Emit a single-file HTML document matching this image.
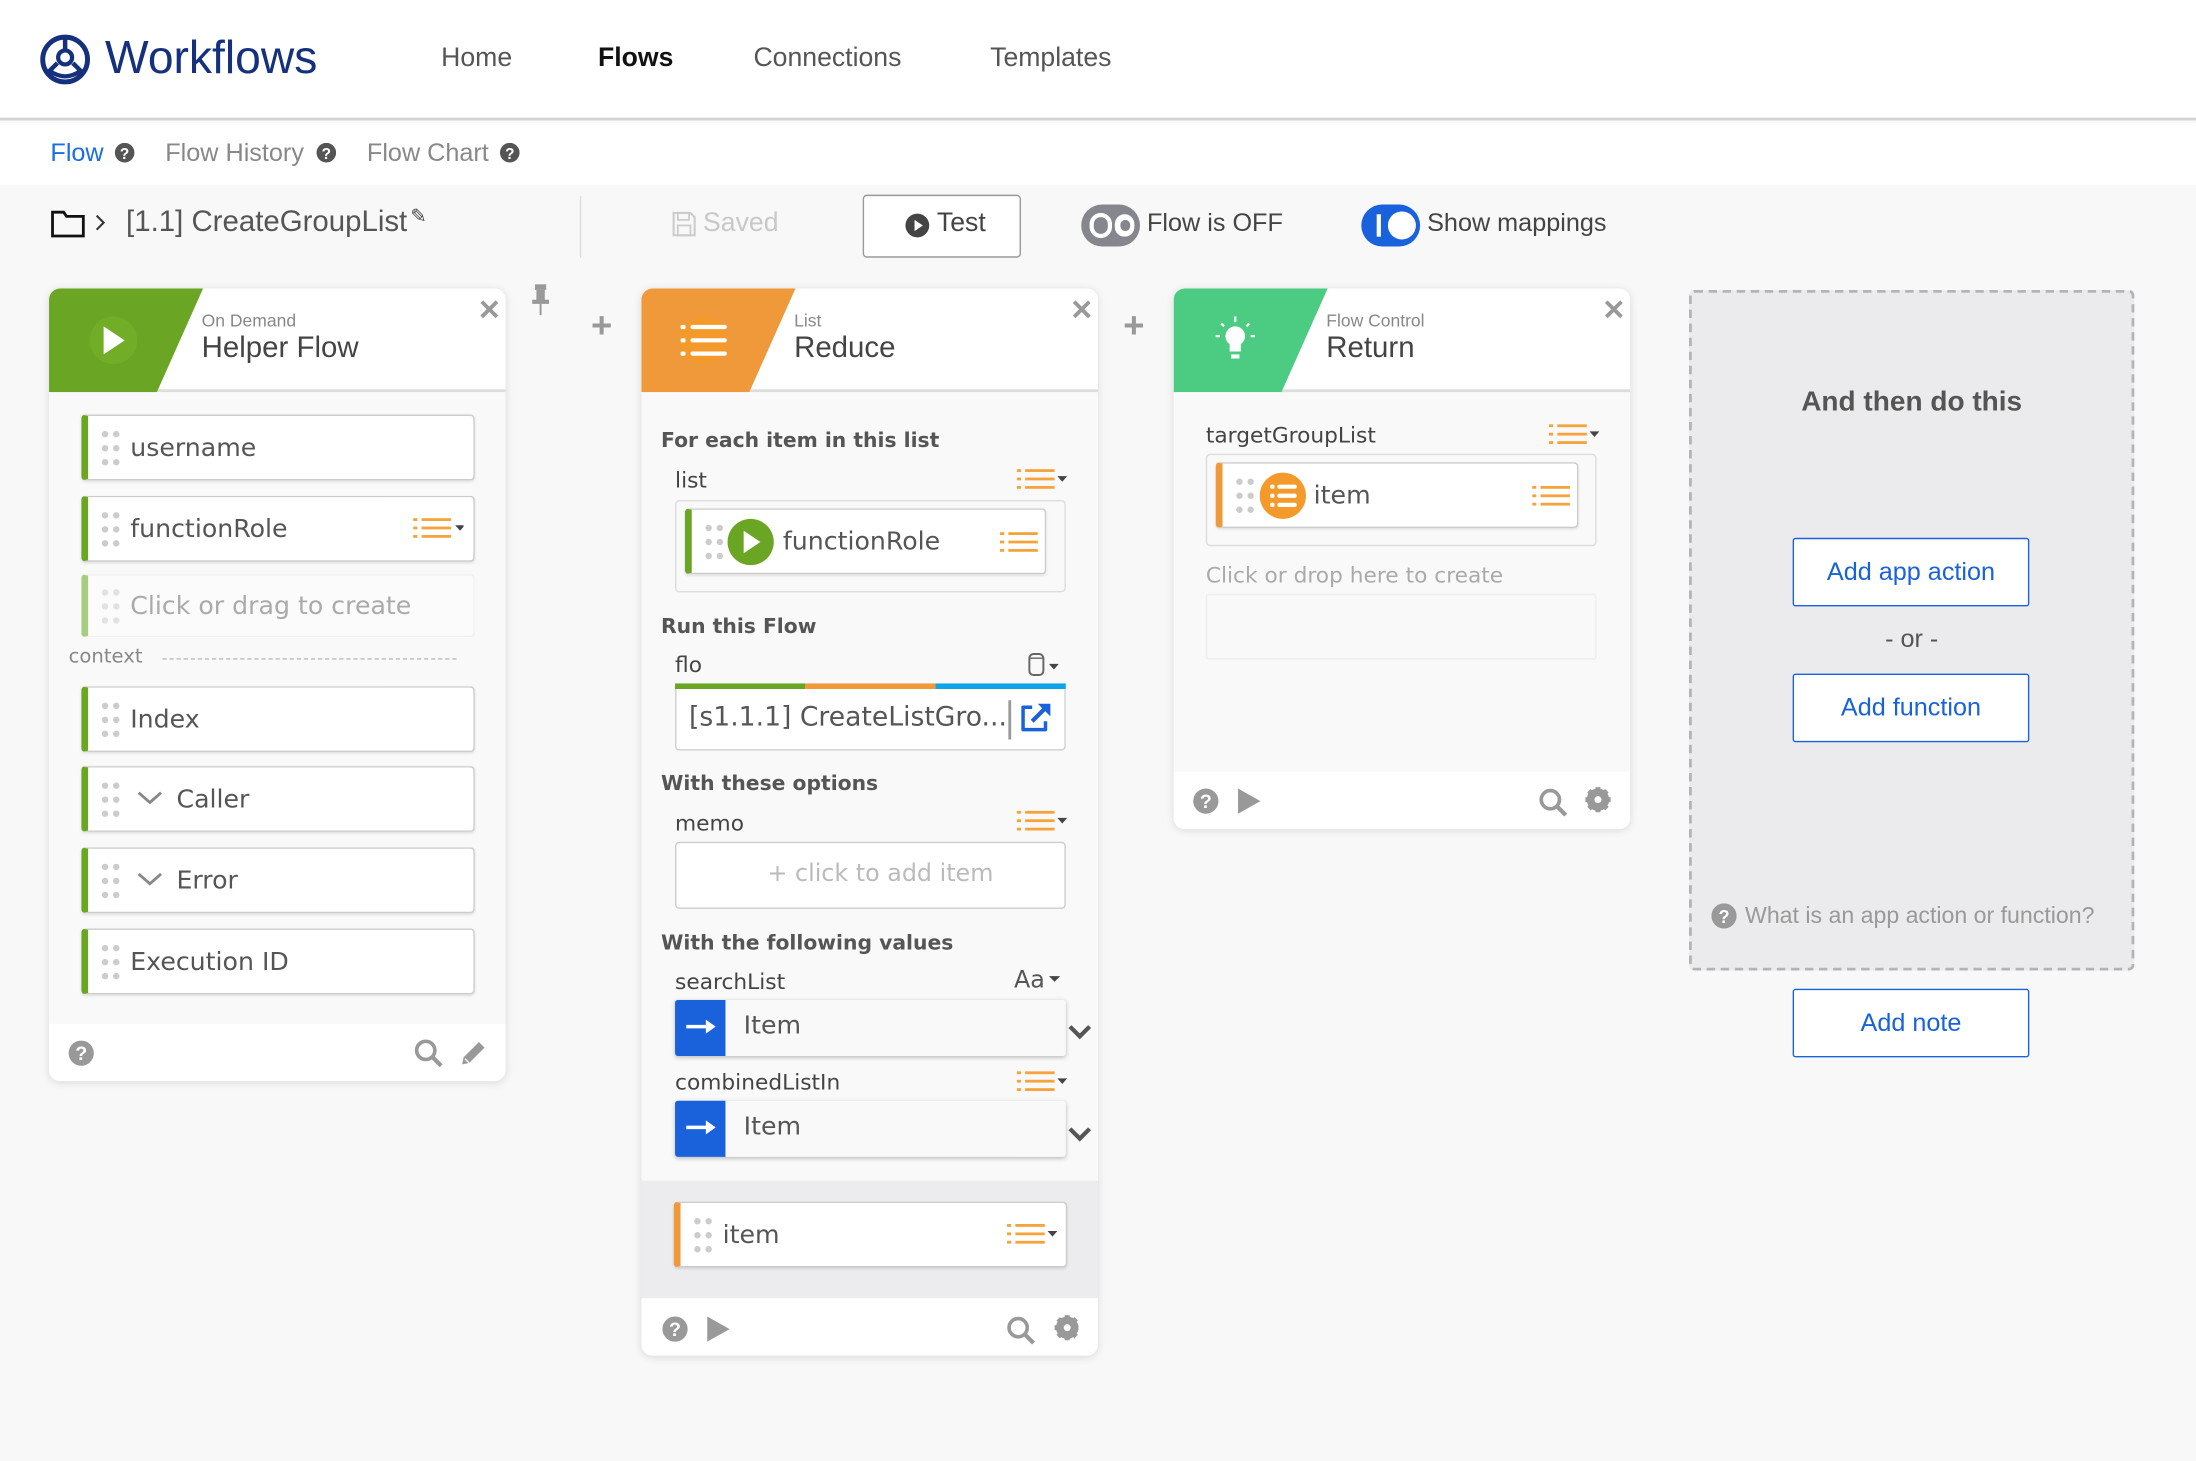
<!DOCTYPE html>
<html><head><meta charset="utf-8">
<style>
*{box-sizing:border-box;margin:0;padding:0}
html,body{width:2196px;height:1460px;overflow:hidden;background:#f8f8f8}
#w{position:absolute;left:0;top:0;width:1568px;height:1043px;transform:scale(1.4005);transform-origin:0 0;font-family:"Liberation Sans",sans-serif;color:#444}
.a{position:absolute}
.t{position:absolute;white-space:nowrap}
.dv{font-family:"DejaVu Sans","Liberation Sans",sans-serif}
.card{position:absolute;background:#f9f9f9;border-radius:8px;box-shadow:0 1px 6px rgba(0,0,0,.12);overflow:hidden}
.hd{position:absolute;left:0;top:0;width:100%;height:74px;background:#fff;border-bottom:2px solid #ddd}
.ft{position:absolute;left:0;bottom:0;width:100%;height:41px;background:#fff}
.fld{position:absolute;background:#fff;border:1px solid #ccc;border-left:5px solid #6aa524;border-radius:3px;box-shadow:0 1px 2px rgba(0,0,0,.1)}
.fld .n{position:absolute;top:50%;transform:translateY(-50%);font-family:"DejaVu Sans",sans-serif;font-size:18px;color:#555;white-space:nowrap}
.lbl{position:absolute;font-family:"DejaVu Sans",sans-serif;font-size:15.5px;color:#444;white-space:nowrap}
.sec{position:absolute;font-family:"DejaVu Sans",sans-serif;font-size:14.5px;font-weight:bold;color:#555;white-space:nowrap}
.btn{position:absolute;left:1280px;width:169px;height:49px;background:#fff;border:1.5px solid #1a62dc;border-radius:2px;color:#1a62dc;font-size:18px;text-align:center;line-height:46px}
.x{position:absolute;font-size:20px;color:#999;font-weight:bold}
</style></head><body><div id="w">

<!-- header -->
<div class="a" style="left:0;top:0;width:1568px;height:86px;background:#fff;border-bottom:2px solid #d4d4d6"></div>
<svg class="a" style="left:28px;top:24px" width="37" height="37" viewBox="0 0 37 37"><circle cx="18.5" cy="18.5" r="16" fill="none" stroke="#15307c" stroke-width="3.5"/><circle cx="18.5" cy="17" r="5" fill="none" stroke="#15307c" stroke-width="3"/><path d="M18.5 3v9M13 21 5 29M24 21l8 8" stroke="#15307c" stroke-width="3.2"/><path d="M8 27q10.5 7 21 0" fill="none" stroke="#15307c" stroke-width="3"/></svg>
<div class="t" style="left:75px;top:22px;font-size:33px;color:#15307c">Workflows</div>
<div class="t" style="left:315px;top:31px;font-size:19px;color:#555">Home</div>
<div class="t" style="left:427px;top:31px;font-size:19px;color:#111;font-weight:bold">Flows</div>
<div class="t" style="left:538px;top:31px;font-size:19px;color:#555">Connections</div>
<div class="t" style="left:707px;top:31px;font-size:19px;color:#555">Templates</div>

<!-- subnav -->
<div class="a" style="left:0;top:88px;width:1568px;height:44px;background:#fff"></div>
<div class="t" style="left:36px;top:99px;font-size:18px;color:#1a6ee8">Flow</div>
<svg class="a" style="left:82px;top:102px" width="14" height="14"><circle cx="7" cy="7" r="7" fill="#555"/><text x="7" y="11.5" font-size="11" font-weight="bold" fill="#fff" text-anchor="middle" font-family="Liberation Sans">?</text></svg>
<div class="t" style="left:118px;top:99px;font-size:18px;color:#888">Flow History</div>
<svg class="a" style="left:226px;top:102px" width="14" height="14"><circle cx="7" cy="7" r="7" fill="#555"/><text x="7" y="11.5" font-size="11" font-weight="bold" fill="#fff" text-anchor="middle" font-family="Liberation Sans">?</text></svg>
<div class="t" style="left:262px;top:99px;font-size:18px;color:#888">Flow Chart</div>
<svg class="a" style="left:357px;top:102px" width="14" height="14"><circle cx="7" cy="7" r="7" fill="#555"/><text x="7" y="11.5" font-size="11" font-weight="bold" fill="#fff" text-anchor="middle" font-family="Liberation Sans">?</text></svg>

<!-- toolbar -->
<svg class="a" style="left:36px;top:148px" width="42" height="22"><path d="M1.5 3.5h8l2 3h12v14h-22z" fill="none" stroke="#111" stroke-width="2"/><path d="M33 6l5 5-5 5" fill="none" stroke="#333" stroke-width="1.5"/></svg>
<div class="t" style="left:90px;top:147px;font-size:21px;color:#555">[1.1] CreateGroupList</div>
<div class="t" style="left:293px;top:146px;font-size:14px;color:#444">✎</div>
<div class="a" style="left:414px;top:140px;width:1px;height:44px;background:#ddd"></div>
<svg class="a" style="left:480px;top:151px" width="17" height="18"><path d="M1 1h12l3 3v13H1z" fill="none" stroke="#ccc" stroke-width="1.5"/><rect x="4" y="1" width="8" height="5" fill="none" stroke="#ccc" stroke-width="1.3"/><rect x="4" y="10" width="9" height="7" fill="none" stroke="#ccc" stroke-width="1.3"/></svg>
<div class="t" style="left:502px;top:149px;font-size:19px;color:#c8c8c8">Saved</div>
<div class="a" style="left:616px;top:139px;width:113px;height:45px;background:#fff;border:1.5px solid #999;border-radius:3px"></div>
<svg class="a" style="left:646px;top:152px" width="18" height="18"><circle cx="9" cy="9" r="8.5" fill="#444"/><path d="M7 5l6 4-6 4z" fill="#fff"/></svg>
<div class="t" style="left:669px;top:149px;font-size:19px;color:#444">Test</div>
<div class="a" style="left:772px;top:146px;width:42px;height:30px;border-radius:15px;background:#86868f"></div>
<div class="a" style="left:778px;top:152px;width:16px;height:18px;border-radius:9px;border:3px solid #fff"></div>
<div class="a" style="left:796px;top:153px;width:14px;height:16px;border-radius:8px;background:#fff"></div>
<div class="a" style="left:800px;top:157px;width:7px;height:8px;border-radius:4px;background:#86868f"></div>
<div class="t" style="left:819px;top:149px;font-size:18px;color:#444">Flow is OFF</div>
<div class="a" style="left:972px;top:146px;width:42px;height:30px;border-radius:15px;background:#1a62dc"></div>
<div class="a" style="left:983px;top:153px;width:3px;height:16px;background:#fff"></div>
<div class="a" style="left:991px;top:151px;width:20px;height:20px;border-radius:10px;background:#fff"></div>
<div class="t" style="left:1019px;top:149px;font-size:18px;color:#444">Show mappings</div>

<!-- pin & pluses -->
<svg class="a" style="left:378px;top:202px" width="16" height="24"><rect x="4" y="1" width="8" height="4" fill="#999"/><rect x="5" y="5" width="6" height="8" fill="#999"/><rect x="2" y="12" width="12" height="3" fill="#999"/><rect x="7.3" y="15" width="1.4" height="8" fill="#999"/></svg>
<div class="t" style="left:422px;top:217px;font-size:26px;color:#999;font-weight:bold">+</div>
<div class="t" style="left:802px;top:217px;font-size:26px;color:#999;font-weight:bold">+</div>

<!-- CARD 1 -->
<div class="card" style="left:35px;top:206px;width:326px;height:566px">
 <div class="hd"></div>
 <svg class="a" style="left:0;top:0" width="120" height="74"><path d="M0 0H110L77 74H0z" fill="#6aa524"/><circle cx="46" cy="37" r="17" fill="#72ad28"/><path d="M39 27l15 10-15 10z" fill="#fff"/></svg>
 <div class="t" style="left:109px;top:16px;font-size:12.5px;color:#888">On Demand</div>
 <div class="t" style="left:109px;top:31px;font-size:21px;color:#444">Helper Flow</div>
 <div class="x" style="left:306px;top:3px">✕</div>
 <div class="ft"></div>
</div>
<!-- fields card1 -->
<div class="fld" style="left:58px;top:296px;width:281px;height:47px"><svg class="a" style="left:9px;top:10px" width="14" height="26"><g fill="#ccc"><circle cx="3" cy="3" r="2.3"/><circle cx="11" cy="3" r="2.3"/><circle cx="3" cy="13" r="2.3"/><circle cx="11" cy="13" r="2.3"/><circle cx="3" cy="23" r="2.3"/><circle cx="11" cy="23" r="2.3"/></g></svg><span class="n" style="left:30px">username</span></div>
<div class="fld" style="left:58px;top:354px;width:281px;height:47px"><svg class="a" style="left:9px;top:10px" width="14" height="26"><g fill="#ccc"><circle cx="3" cy="3" r="2.3"/><circle cx="11" cy="3" r="2.3"/><circle cx="3" cy="13" r="2.3"/><circle cx="11" cy="13" r="2.3"/><circle cx="3" cy="23" r="2.3"/><circle cx="11" cy="23" r="2.3"/></g></svg><span class="n" style="left:30px">functionRole</span>
 <svg class="a" style="left:232px;top:14px" width="36" height="16"><g fill="#f5a33a"><rect x="0" y="1" width="3" height="2"/><rect x="6" y="1" width="21" height="2"/><rect x="0" y="7" width="3" height="2"/><rect x="6" y="7" width="21" height="2"/><rect x="0" y="13" width="3" height="2"/><rect x="6" y="13" width="21" height="2"/></g><path d="M30 6h7l-3.5 4z" fill="#444"/></svg></div>
<div class="fld" style="left:58px;top:410px;width:281px;height:45px;border-color:#f0f0f0;border-left-color:#a8cc80;box-shadow:none;background:#fbfbfb"><svg class="a" style="left:9px;top:9px" width="14" height="26"><g fill="#e2e2e2"><circle cx="3" cy="3" r="2.3"/><circle cx="11" cy="3" r="2.3"/><circle cx="3" cy="13" r="2.3"/><circle cx="11" cy="13" r="2.3"/><circle cx="3" cy="23" r="2.3"/><circle cx="11" cy="23" r="2.3"/></g></svg><span class="n" style="left:30px;color:#aaa">Click or drag to create</span></div>
<div class="t dv" style="left:49px;top:461px;font-size:14px;color:#888">context</div>
<div class="a" style="left:116px;top:470px;width:210px;border-top:1px dashed #bbb"></div>
<div class="fld" style="left:58px;top:490px;width:281px;height:47px"><svg class="a" style="left:9px;top:10px" width="14" height="26"><g fill="#ccc"><circle cx="3" cy="3" r="2.3"/><circle cx="11" cy="3" r="2.3"/><circle cx="3" cy="13" r="2.3"/><circle cx="11" cy="13" r="2.3"/><circle cx="3" cy="23" r="2.3"/><circle cx="11" cy="23" r="2.3"/></g></svg><span class="n" style="left:30px">Index</span></div>
<div class="fld" style="left:58px;top:547px;width:281px;height:47px"><svg class="a" style="left:9px;top:10px" width="14" height="26"><g fill="#ccc"><circle cx="3" cy="3" r="2.3"/><circle cx="11" cy="3" r="2.3"/><circle cx="3" cy="13" r="2.3"/><circle cx="11" cy="13" r="2.3"/><circle cx="3" cy="23" r="2.3"/><circle cx="11" cy="23" r="2.3"/></g></svg><svg class="a" style="left:34px;top:16px" width="20" height="12"><path d="M2 2l8 7 8-7" fill="none" stroke="#888" stroke-width="2"/></svg><span class="n" style="left:63px">Caller</span></div>
<div class="fld" style="left:58px;top:605px;width:281px;height:47px"><svg class="a" style="left:9px;top:10px" width="14" height="26"><g fill="#ccc"><circle cx="3" cy="3" r="2.3"/><circle cx="11" cy="3" r="2.3"/><circle cx="3" cy="13" r="2.3"/><circle cx="11" cy="13" r="2.3"/><circle cx="3" cy="23" r="2.3"/><circle cx="11" cy="23" r="2.3"/></g></svg><svg class="a" style="left:34px;top:16px" width="20" height="12"><path d="M2 2l8 7 8-7" fill="none" stroke="#888" stroke-width="2"/></svg><span class="n" style="left:63px">Error</span></div>
<div class="fld" style="left:58px;top:663px;width:281px;height:47px"><svg class="a" style="left:9px;top:10px" width="14" height="26"><g fill="#ccc"><circle cx="3" cy="3" r="2.3"/><circle cx="11" cy="3" r="2.3"/><circle cx="3" cy="13" r="2.3"/><circle cx="11" cy="13" r="2.3"/><circle cx="3" cy="23" r="2.3"/><circle cx="11" cy="23" r="2.3"/></g></svg><span class="n" style="left:30px">Execution ID</span></div>
<svg class="a" style="left:48px;top:742px" width="20" height="20"><circle cx="10" cy="10" r="9" fill="#999"/><text x="10" y="15" font-size="14" font-weight="bold" fill="#fff" text-anchor="middle" font-family="Liberation Sans">?</text></svg>
<svg class="a" style="left:295px;top:741px" width="22" height="22"><circle cx="9" cy="9" r="6.5" fill="none" stroke="#999" stroke-width="2.6"/><path d="M14 14l6 6" stroke="#999" stroke-width="3"/></svg>
<svg class="a" style="left:328px;top:742px" width="20" height="20"><path d="M2 18l1-5L14 2l4 4L7 17z" fill="#999"/><path d="M4 14l3 3" stroke="#fff" stroke-width="1"/></svg>

<!-- CARD 2 -->
<div class="card" style="left:458px;top:206px;width:326px;height:762px">
 <div class="hd"></div>
 <svg class="a" style="left:0;top:0" width="120" height="74"><path d="M0 0H110L77 74H0z" fill="#f0993a"/><circle cx="44" cy="37" r="17" fill="#f39a2a"/><g fill="#fff"><rect x="28" y="26" width="3.5" height="3" rx="1"/><rect x="35" y="26" width="26" height="3" rx="1.5"/><rect x="28" y="35.5" width="3.5" height="3" rx="1"/><rect x="35" y="35.5" width="26" height="3" rx="1.5"/><rect x="28" y="45" width="3.5" height="3" rx="1"/><rect x="35" y="45" width="26" height="3" rx="1.5"/></g></svg>
 <div class="t" style="left:109px;top:16px;font-size:12.5px;color:#888">List</div>
 <div class="t" style="left:109px;top:31px;font-size:21px;color:#444">Reduce</div>
 <div class="x" style="left:306px;top:3px">✕</div>
 <div class="a" style="left:0;top:637px;width:326px;height:84px;background:#ececee"></div>
 <div class="ft"></div>
</div>
<div class="sec" style="left:472px;top:307px">For each item in this list</div>
<div class="lbl" style="left:482px;top:334px">list</div>
<svg class="a" style="left:726px;top:334px" width="36" height="16"><g fill="#f5a33a"><rect x="0" y="1" width="3" height="2"/><rect x="6" y="1" width="21" height="2"/><rect x="0" y="7" width="3" height="2"/><rect x="6" y="7" width="21" height="2"/><rect x="0" y="13" width="3" height="2"/><rect x="6" y="13" width="21" height="2"/></g><path d="M29 6h7l-3.5 4z" fill="#444"/></svg>
<div class="a" style="left:482px;top:357px;width:279px;height:66px;border:1.5px solid #ddd;border-radius:3px;background:#f9f9f9"></div>
<div class="fld" style="left:489px;top:363px;width:258px;height:47px"><svg class="a" style="left:9px;top:10px" width="14" height="26"><g fill="#ccc"><circle cx="3" cy="3" r="2.3"/><circle cx="11" cy="3" r="2.3"/><circle cx="3" cy="13" r="2.3"/><circle cx="11" cy="13" r="2.3"/><circle cx="3" cy="23" r="2.3"/><circle cx="11" cy="23" r="2.3"/></g></svg><svg class="a" style="left:25px;top:6px" width="34" height="34"><circle cx="17" cy="17" r="16.5" fill="#6aa524"/><path d="M12 9l12 8-12 8z" fill="#fff"/></svg><span class="n" style="left:65px">functionRole</span>
 <svg class="a" style="left:220px;top:15px" width="30" height="16"><g fill="#f5a33a"><rect x="0" y="1" width="3" height="2"/><rect x="6" y="1" width="21" height="2"/><rect x="0" y="7" width="3" height="2"/><rect x="6" y="7" width="21" height="2"/><rect x="0" y="13" width="3" height="2"/><rect x="6" y="13" width="21" height="2"/></g></svg></div>
<div class="sec" style="left:472px;top:440px">Run this Flow</div>
<div class="lbl" style="left:482px;top:466px">flo</div>
<svg class="a" style="left:734px;top:466px" width="28" height="18"><rect x="1" y="1" width="10" height="15" rx="3" fill="none" stroke="#666" stroke-width="1.4"/><path d="M1 4h10" stroke="#666" stroke-width="1"/><path d="M15 8h7l-3.5 4z" fill="#444"/></svg>
<div class="a" style="left:482px;top:488px;width:93px;height:4px;background:#6aa524"></div>
<div class="a" style="left:575px;top:488px;width:93px;height:4px;background:#f0993a"></div>
<div class="a" style="left:668px;top:488px;width:93px;height:4px;background:#0ea4e8"></div>
<div class="a" style="left:482px;top:492px;width:279px;height:44px;background:#fff;border:1.5px solid #ccc;border-top:none;border-radius:0 0 3px 3px"></div>
<div class="t dv" style="left:492px;top:501px;font-size:19px;color:#555">[s1.1.1] CreateListGro...</div>
<div class="a" style="left:720px;top:500px;width:1.5px;height:28px;background:#999"></div>
<svg class="a" style="left:728px;top:501px" width="24" height="22"><path d="M9 4H2.5v16h16v-6" fill="none" stroke="#1a62dc" stroke-width="2.5" stroke-linejoin="round"/><path d="M9 14L20 3" stroke="#1a62dc" stroke-width="3"/><path d="M13 1.5h9v9z" fill="#1a62dc"/></svg>
<div class="sec" style="left:472px;top:552px">With these options</div>
<div class="lbl" style="left:482px;top:579px">memo</div>
<svg class="a" style="left:726px;top:578px" width="36" height="16"><g fill="#f5a33a"><rect x="0" y="1" width="3" height="2"/><rect x="6" y="1" width="21" height="2"/><rect x="0" y="7" width="3" height="2"/><rect x="6" y="7" width="21" height="2"/><rect x="0" y="13" width="3" height="2"/><rect x="6" y="13" width="21" height="2"/></g><path d="M29 6h7l-3.5 4z" fill="#444"/></svg>
<div class="a" style="left:482px;top:601px;width:279px;height:48px;background:#fff;border:1.5px solid #ccc;border-radius:3px"></div>
<div class="t dv" style="left:548px;top:614px;font-size:17px;color:#bbb">+ click to add item</div>
<div class="sec" style="left:472px;top:666px">With the following values</div>
<div class="lbl" style="left:482px;top:692px">searchList</div>
<div class="t dv" style="left:724px;top:690px;font-size:17px;color:#555">Aa</div>
<svg class="a" style="left:748px;top:694px" width="12" height="10"><path d="M1 3h8l-4 4z" fill="#444"/></svg>
<div class="a" style="left:482px;top:714px;width:279px;height:40px;background:#f9f9f9;border-radius:2px;box-shadow:0 1px 3px rgba(0,0,0,.25)"></div>
<div class="a" style="left:482px;top:714px;width:36px;height:40px;background:#1a62dc;border-radius:2px 0 0 2px"></div>
<svg class="a" style="left:488px;top:726px" width="26" height="14"><path d="M2 7h16" stroke="#fff" stroke-width="2.5"/><path d="M16 2l7 5-7 5z" fill="#fff"/></svg>
<div class="t dv" style="left:531px;top:722px;font-size:18px;color:#555">Item</div>
<svg class="a" style="left:762px;top:730px" width="18" height="14"><path d="M2 3l7 7 7-7" fill="none" stroke="#555" stroke-width="3"/></svg>
<div class="lbl" style="left:482px;top:764px">combinedListIn</div>
<svg class="a" style="left:726px;top:764px" width="36" height="16"><g fill="#f5a33a"><rect x="0" y="1" width="3" height="2"/><rect x="6" y="1" width="21" height="2"/><rect x="0" y="7" width="3" height="2"/><rect x="6" y="7" width="21" height="2"/><rect x="0" y="13" width="3" height="2"/><rect x="6" y="13" width="21" height="2"/></g><path d="M29 6h7l-3.5 4z" fill="#444"/></svg>
<div class="a" style="left:482px;top:786px;width:279px;height:40px;background:#f9f9f9;border-radius:2px;box-shadow:0 1px 3px rgba(0,0,0,.25)"></div>
<div class="a" style="left:482px;top:786px;width:36px;height:40px;background:#1a62dc;border-radius:2px 0 0 2px"></div>
<svg class="a" style="left:488px;top:798px" width="26" height="14"><path d="M2 7h16" stroke="#fff" stroke-width="2.5"/><path d="M16 2l7 5-7 5z" fill="#fff"/></svg>
<div class="t dv" style="left:531px;top:794px;font-size:18px;color:#555">Item</div>
<svg class="a" style="left:762px;top:803px" width="18" height="14"><path d="M2 3l7 7 7-7" fill="none" stroke="#555" stroke-width="3"/></svg>
<div class="fld" style="left:481px;top:858px;width:281px;height:47px;border-left-color:#f0993a"><svg class="a" style="left:9px;top:10px" width="14" height="26"><g fill="#ccc"><circle cx="3" cy="3" r="2.3"/><circle cx="11" cy="3" r="2.3"/><circle cx="3" cy="13" r="2.3"/><circle cx="11" cy="13" r="2.3"/><circle cx="3" cy="23" r="2.3"/><circle cx="11" cy="23" r="2.3"/></g></svg><span class="n" style="left:30px">item</span>
 <svg class="a" style="left:233px;top:14px" width="36" height="16"><g fill="#f5a33a"><rect x="0" y="1" width="3" height="2"/><rect x="6" y="1" width="21" height="2"/><rect x="0" y="7" width="3" height="2"/><rect x="6" y="7" width="21" height="2"/><rect x="0" y="13" width="3" height="2"/><rect x="6" y="13" width="21" height="2"/></g><path d="M29 6h7l-3.5 4z" fill="#444"/></svg></div>
<svg class="a" style="left:471px;top:938px" width="52" height="22"><circle cx="11" cy="11" r="9" fill="#999"/><text x="11" y="16" font-size="14" font-weight="bold" fill="#fff" text-anchor="middle" font-family="Liberation Sans">?</text><path d="M34 2l16 9-16 9z" fill="#999"/></svg>
<svg class="a" style="left:718px;top:938px" width="52" height="24"><circle cx="9" cy="10" r="6.5" fill="none" stroke="#999" stroke-width="2.6"/><path d="M14 15l6 6" stroke="#999" stroke-width="3"/><circle cx="44" cy="10" r="6" fill="none" stroke="#999" stroke-width="4"/><g stroke="#999" stroke-width="3.5"><path d="M44 1v18M35 10h18M37.6 3.6l12.8 12.8M50.4 3.6L37.6 16.4"/></g><circle cx="44" cy="10" r="2.5" fill="#fff"/></svg>

<!-- CARD 3 -->
<div class="card" style="left:838px;top:206px;width:326px;height:386px">
 <div class="hd"></div>
 <svg class="a" style="left:0;top:0" width="120" height="74"><path d="M0 0H110L77 74H0z" fill="#4ccc82"/><circle cx="44" cy="34" r="7" fill="#fff"/><path d="M40 39h8v6h-8z" fill="#fff"/><path d="M41 47h6v3h-6z" fill="#fff"/><g stroke="#fff" stroke-width="1.6"><path d="M44 20v4M34 25l2 2M54 25l-2 2M30 34h3M55 34h3"/></g></svg>
 <div class="t" style="left:109px;top:16px;font-size:12.5px;color:#888">Flow Control</div>
 <div class="t" style="left:109px;top:31px;font-size:21px;color:#444">Return</div>
 <div class="x" style="left:306px;top:3px">✕</div>
 <div class="ft"></div>
</div>
<div class="lbl" style="left:861px;top:302px">targetGroupList</div>
<svg class="a" style="left:1106px;top:302px" width="36" height="16"><g fill="#f5a33a"><rect x="0" y="1" width="3" height="2"/><rect x="6" y="1" width="21" height="2"/><rect x="0" y="7" width="3" height="2"/><rect x="6" y="7" width="21" height="2"/><rect x="0" y="13" width="3" height="2"/><rect x="6" y="13" width="21" height="2"/></g><path d="M29 6h7l-3.5 4z" fill="#444"/></svg>
<div class="a" style="left:861px;top:324px;width:279px;height:66px;border:1.5px solid #ddd;border-radius:3px;background:#f9f9f9"></div>
<div class="fld" style="left:868px;top:330px;width:259px;height:47px;border-left-color:#f0993a"><svg class="a" style="left:9px;top:10px" width="14" height="26"><g fill="#ccc"><circle cx="3" cy="3" r="2.3"/><circle cx="11" cy="3" r="2.3"/><circle cx="3" cy="13" r="2.3"/><circle cx="11" cy="13" r="2.3"/><circle cx="3" cy="23" r="2.3"/><circle cx="11" cy="23" r="2.3"/></g></svg><svg class="a" style="left:26px;top:6px" width="34" height="34"><circle cx="17" cy="17" r="16.5" fill="#f39a2a"/><g fill="#fff"><rect x="8" y="9" width="3" height="3" rx="1"/><rect x="13" y="9" width="14" height="3" rx="1.5"/><rect x="8" y="15.5" width="3" height="3" rx="1"/><rect x="13" y="15.5" width="14" height="3" rx="1.5"/><rect x="8" y="22" width="3" height="3" rx="1"/><rect x="13" y="22" width="14" height="3" rx="1.5"/></g></svg><span class="n" style="left:65px">item</span>
 <svg class="a" style="left:221px;top:15px" width="30" height="16"><g fill="#f5a33a"><rect x="0" y="1" width="3" height="2"/><rect x="6" y="1" width="21" height="2"/><rect x="0" y="7" width="3" height="2"/><rect x="6" y="7" width="21" height="2"/><rect x="0" y="13" width="3" height="2"/><rect x="6" y="13" width="21" height="2"/></g></svg></div>
<div class="t dv" style="left:861px;top:402px;font-size:15.5px;color:#aaa">Click or drop here to create</div>
<div class="a" style="left:861px;top:424px;width:279px;height:47px;border:1.5px solid #eee;border-radius:2px;background:#f9f9f9"></div>
<svg class="a" style="left:851px;top:561px" width="52" height="22"><circle cx="10" cy="11" r="9" fill="#999"/><text x="10" y="16" font-size="14" font-weight="bold" fill="#fff" text-anchor="middle" font-family="Liberation Sans">?</text><path d="M33 2l16 9-16 9z" fill="#999"/></svg>
<svg class="a" style="left:1098px;top:561px" width="54" height="24"><circle cx="9" cy="10" r="6.5" fill="none" stroke="#999" stroke-width="2.6"/><path d="M14 15l6 6" stroke="#999" stroke-width="3"/><circle cx="43" cy="10" r="6" fill="none" stroke="#999" stroke-width="4"/><g stroke="#999" stroke-width="3.5"><path d="M43 1v18M34 10h18M36.6 3.6l12.8 12.8M49.4 3.6L36.6 16.4"/></g><circle cx="43" cy="10" r="2.5" fill="#fff"/></svg>

<!-- dashed box -->
<div class="a" style="left:1206px;top:207px;width:318px;height:486px;background:#ebebed;border:2px dashed #b4b4b8;border-radius:4px"></div>
<div class="t" style="left:1206px;top:276px;width:318px;text-align:center;font-size:20px;font-weight:bold;color:#555">And then do this</div>
<div class="btn" style="top:384px">Add app action</div>
<div class="t" style="left:1206px;top:446px;width:318px;text-align:center;font-size:18px;color:#555">- or -</div>
<div class="btn" style="top:481px">Add function</div>
<svg class="a" style="left:1222px;top:645px" width="18" height="18"><circle cx="9" cy="9" r="9" fill="#999"/><text x="9" y="14" font-size="13" font-weight="bold" fill="#fff" text-anchor="middle" font-family="Liberation Sans">?</text></svg>
<div class="t" style="left:1246px;top:645px;font-size:16.5px;color:#999">What is an app action or function?</div>
<div class="btn" style="top:706px">Add note</div>

</div></body></html>
